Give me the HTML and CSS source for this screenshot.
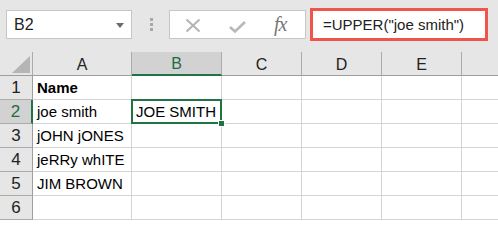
FILE: index.html
```html
<!DOCTYPE html>
<html>
<head>
<meta charset="utf-8">
<link rel="stylesheet" href="styles.css">
</head>
<body>
<div class="app">
  <div class="toolbar">
    <div class="namebox">
      <span class="ref">B2</span>
      <svg class="dd" width="8" height="5" viewBox="0 0 8 5"><path d="M0 0H8L4 5Z" fill="#6b6b6b"/></svg>
    </div>
    <div class="grip"><i></i><i></i><i></i></div>
    <div class="buttons">
      <svg class="btn-x" width="16" height="15" viewBox="0 0 16 15"><path d="M1.5 1.5L14.5 13.5M14.5 1.5L1.5 13.5" stroke="#b3b3b3" stroke-width="2" fill="none"/></svg>
      <svg class="btn-ok" width="17" height="12" viewBox="0 0 17 12"><path d="M1 6L6 10.5L16 1" stroke="#b8b8b8" stroke-width="2.6" fill="none"/></svg>
      <span class="fx">fx</span>
    </div>
    <div class="formula">=UPPER("joe smith")</div>
  </div>
  <div class="sheet">
    <div class="hd corner"><svg width="18" height="17" viewBox="0 0 18 17"><path d="M18 0V17H0Z" fill="#b5b5b5"/></svg></div>
    <div class="hd col">A</div>
    <div class="hd col sel-col">B</div>
    <div class="hd col">C</div>
    <div class="hd col">D</div>
    <div class="hd col">E</div>
    <div class="hd col last"></div>

    <div class="hd row">1</div>
    <div class="c bold">Name</div><div class="c"></div><div class="c"></div><div class="c"></div><div class="c"></div><div class="c last"></div>

    <div class="hd row sel-row">2</div>
    <div class="c">joe smith</div><div class="c active">JOE SMITH<span class="handle"></span></div><div class="c"></div><div class="c"></div><div class="c"></div><div class="c last"></div>

    <div class="hd row">3</div>
    <div class="c">jOHN jONES</div><div class="c"></div><div class="c"></div><div class="c"></div><div class="c"></div><div class="c last"></div>

    <div class="hd row">4</div>
    <div class="c">jeRRy whITE</div><div class="c"></div><div class="c"></div><div class="c"></div><div class="c"></div><div class="c last"></div>

    <div class="hd row">5</div>
    <div class="c">JIM BROWN</div><div class="c"></div><div class="c"></div><div class="c"></div><div class="c"></div><div class="c last"></div>

    <div class="hd row">6</div>
    <div class="c"></div><div class="c"></div><div class="c"></div><div class="c"></div><div class="c"></div><div class="c last"></div>
  </div>
</div>
</body>
</html>
```

FILE: styles.css
```css
html, body {
  margin: 0;
  padding: 0;
  background: #ffffff;
}
.app {
  width: 498px;
  height: 220px;
  overflow: hidden;
  font-family: "Liberation Sans", Arial, sans-serif;
  font-size: 15px;
  color: #111;
}
.toolbar {
  height: 52px;
  background: #e6e6e6;
  display: flex;
  align-items: flex-start;
  padding-left: 6px;
  box-sizing: border-box;
}
.namebox {
  margin-top: 10px;
  width: 126px;
  height: 29px;
  box-sizing: border-box;
  background: #fff;
  border: 1px solid #c6c6c6;
  display: flex;
  align-items: center;
  justify-content: space-between;
  padding: 0 7px 0 7px;
  font-size: 16px;
}
.ref {
  color: #222;
}
.dd {
  margin-top: 1px;
}
.grip {
  margin: 18px 0 0 18px;
  width: 3px;
  display: flex;
  flex-direction: column;
  gap: 2px;
}
.grip i {
  display: block;
  width: 3px;
  height: 3px;
  background: #a8a8a8;
}
.buttons {
  margin: 10px 0 0 16px;
  width: 137px;
  height: 29px;
  box-sizing: border-box;
  background: #fff;
  border: 1px solid #c6c6c6;
  display: flex;
  align-items: center;
  padding-left: 15px;
}
.btn-x {
  margin-top: 1px;
}
.btn-ok {
  margin-left: 28px;
  margin-top: 5px;
}
.fx {
  margin-left: 28px;
  font-family: "Liberation Serif", "Times New Roman", serif;
  font-style: italic;
  font-size: 20px;
  color: #777;
  letter-spacing: -1px;
}
.formula {
  margin: 8px 0 0 4px;
  width: 178px;
  height: 33px;
  box-sizing: border-box;
  background: #fff;
  border: 3px solid #f0554b;
  padding-left: 10px;
  line-height: 27px;
  color: #222;
}
.sheet {
  display: grid;
  grid-template-columns: 33px 99px 90px 80px 80px 80px 1fr;
  grid-auto-rows: 24px;
}
.hd {
  background: #e6e6e6;
  box-sizing: border-box;
  border-right: 1px solid #ababab;
  border-bottom: 1px solid #9e9e9e;
  display: flex;
  align-items: center;
  justify-content: center;
  color: #222;
  font-size: 16px;
}
.hd.col {
  padding-top: 2px;
}
.hd.row {
  border-bottom: 1px solid #ababab;
  border-right: 1px solid #9e9e9e;
  font-size: 17px;
}
.corner {
  align-items: flex-end;
  justify-content: flex-end;
  padding: 0 2px 2px 0;
}
.sel-col {
  background: #d2d2d2;
  color: #1e6b46;
  border-bottom: 2px solid #217346;
}
.hd.row.sel-row {
  background: #d2d2d2;
  color: #1e6b46;
  border-right: 2px solid #217346;
}
.hd.last {
  border-right: none;
}
.c {
  box-sizing: border-box;
  border-right: 1px solid #d4d4d4;
  border-bottom: 1px solid #d4d4d4;
  padding-left: 4px;
  line-height: 23px;
  white-space: nowrap;
  color: #000;
  font-size: 15px;
}
.c.last {
  border-right: none;
}
.bold {
  font-weight: bold;
}
.active {
  position: relative;
}
.active::after {
  content: "";
  position: absolute;
  left: -1px;
  top: -1px;
  right: -1px;
  bottom: -1px;
  border: 2px solid #217346;
}
.handle {
  position: absolute;
  right: -4px;
  bottom: -4px;
  width: 5px;
  height: 5px;
  background: #217346;
  border: 1px solid #fff;
  z-index: 2;
}
```
